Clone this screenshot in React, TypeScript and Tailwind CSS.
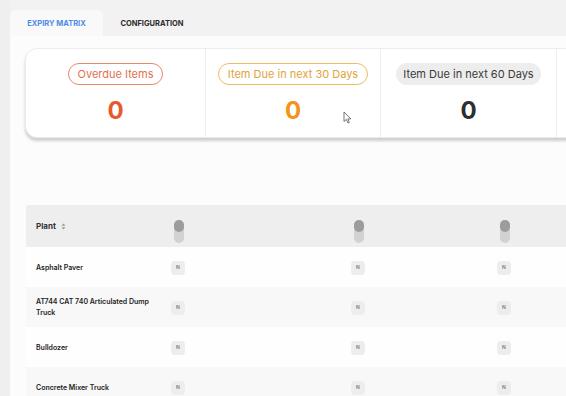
import React from "react";

type Stat = {
  label: string;
  value: number;
  pill: string;
  num: string;
  w: string;
};

const stats: Stat[] = [
  {
    label: "Overdue Items",
    value: 0,
    pill: "border border-[#e58a6c] text-[#e0714f] px-[9px]",
    num: "text-[#e8582c]",
    w: "w-[180px]",
  },
  {
    label: "Item Due in next 30 Days",
    value: 0,
    pill: "border border-[#ecbd62] text-[#e2a23a] px-[9px]",
    num: "text-[#f39318]",
    w: "w-[175px]",
  },
  {
    label: "Item Due in next 60 Days",
    value: 0,
    pill: "bg-[#ededed] text-[#3a3a3a] px-[7px]",
    num: "text-[#2e2e2e]",
    w: "w-[176px]",
  },
];

const plants = [
  "Asphalt Paver",
  "AT744 CAT 740 Articulated Dump Truck",
  "Bulldozer",
  "Concrete Mixer Truck",
];

function Toggle() {
  return (
    <div className="mt-[10px] w-[10px] h-[23px] rounded-full bg-[#d2d2d2] flex flex-col">
      <div className="w-[10px] h-[12px] rounded-full bg-[#9c9c9c]" />
    </div>
  );
}

function NBadge() {
  return (
    <div className="mt-[2px] w-[14px] h-[14px] rounded-[4px] bg-[#ededed] flex items-center justify-center text-[5px] font-semibold text-[#777]">
      N
    </div>
  );
}

function Cursor() {
  return (
    <svg
      className="absolute left-[343px] top-[111px]"
      width="9"
      height="13"
      viewBox="0 0 9 13"
    >
      <path
        d="M1 1 L1 10.5 L3.3 8.4 L5 12 L6.4 11.4 L4.8 7.9 L7.8 7.9 Z"
        fill="#fff"
        stroke="#555"
        strokeWidth="0.8"
        strokeLinejoin="round"
      />
    </svg>
  );
}

export default function App() {
  return (
    <div className="relative w-[566px] h-[396px] overflow-hidden bg-[#f2f2f2] flex font-['Inter',sans-serif]">
      <div className="w-[10px] shrink-0 bg-[#efefef]" />
      <div className="flex-1 flex flex-col min-w-0">
        {/* tabs */}
        <div className="h-[36px] pt-[10px] flex items-end shrink-0">
          <div className="w-[93px] h-[26px] pt-[2px] bg-[#f9f9f9] rounded-t-[6px] flex items-center justify-center text-[7.5px] font-bold text-[#4f8be8]">
            EXPIRY MATRIX
          </div>
          <div className="w-[98px] h-[26px] pt-[2px] flex items-center justify-center text-[7.5px] font-bold text-[#2b2b2b]">
            CONFIGURATION
          </div>
        </div>

        {/* content */}
        <div className="flex-1 bg-[#fcfcfc] pl-[15px] pt-[12px] flex flex-col">
          <div className="w-[580px] h-[90px] bg-white rounded-[12px] border border-[#ececec] shadow-[0_3px_3px_rgba(0,0,0,0.18)] flex shrink-0">
            {stats.map((s, i) => (
              <div
                key={i}
                className={`${s.w} shrink-0 border-r border-[#eeeeee] flex flex-col items-center pt-[14px] gap-[14px]`}
              >
                <div
                  className={`h-[22px] rounded-full flex items-center text-[11px] ${s.pill}`}
                >
                  {s.label}
                </div>
                <div className={`text-[24px] leading-none font-bold ${s.num}`}>
                  {s.value}
                </div>
              </div>
            ))}
            <div className="flex-1" />
          </div>

          {/* table */}
          <div className="mt-[67px] ml-[1px] w-[560px]">
            <div className="h-[42px] bg-[#eeeeee] rounded-tl-[2px] grid grid-cols-[135px_180px_146px_1fr] items-center">
              <div className="pl-[10px] flex items-center gap-[5px] text-[8px] font-bold text-[#333]">
                Plant
                <svg width="5" height="7" viewBox="0 0 5 7">
                  <path d="M2.5 0.5 L4.5 2.8 L0.5 2.8 Z" fill="#999" />
                  <path d="M2.5 6.5 L4.5 4.2 L0.5 4.2 Z" fill="#999" />
                </svg>
              </div>
              <div className="pl-[13px]">
                <Toggle />
              </div>
              <div className="pl-[13px]">
                <Toggle />
              </div>
              <div className="pl-[13px]">
                <Toggle />
              </div>
            </div>
            {plants.map((p, i) => (
              <div
                key={p}
                className={`h-[40px] grid grid-cols-[135px_180px_146px_1fr] items-center ${
                  i % 2 === 1 ? "bg-[#f8f8f8]" : "bg-[#fefefe]"
                }`}
              >
                <div className="pl-[10px] pr-[6px] text-[7px] leading-[11px] font-semibold text-[#222]">
                  {p}
                </div>
                <div className="pl-[10px]">
                  <NBadge />
                </div>
                <div className="pl-[10px]">
                  <NBadge />
                </div>
                <div className="pl-[10px]">
                  <NBadge />
                </div>
              </div>
            ))}
          </div>
        </div>
      </div>
      <Cursor />
    </div>
  );
}
